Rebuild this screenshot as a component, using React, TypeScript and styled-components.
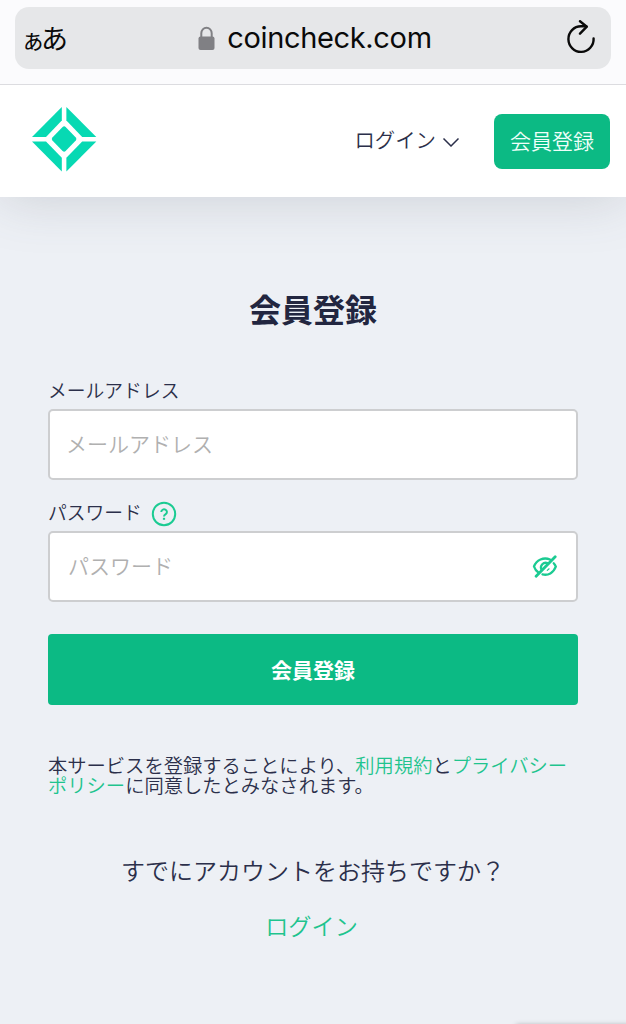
import React from "react";
import styled, { createGlobalStyle } from "styled-components";

const GlobalStyle = createGlobalStyle`
  *, *::before, *::after { box-sizing: border-box; }
  body {
    margin: 0;
    background: #edf0f5;
    color: #2b2f4a;
    font-family: "Noto Sans CJK JP", sans-serif;
    font-weight: 350;
  }
`;

const Page = styled.div`
  position: relative;
  display: flex;
  flex-direction: column;
  height: 1024px;
  overflow: hidden;
  background: #edf0f5;
`;

const BrowserBar = styled.div`
  position: relative;
  z-index: 1;
  height: 85px;
  flex: none;
  padding: 7px 15px 0;
  background: #fbfbfd;
  border-bottom: 1px solid #dcdce0;
`;

const AddressField = styled.div`
  display: flex;
  align-items: center;
  justify-content: space-between;
  height: 62px;
  padding: 0 15px 0 6px;
  border-radius: 14px;
  background: #e6e7e9;
  color: #0a0a0a;
`;

const ReaderLabel = styled.div`
  display: flex;
  align-items: baseline;
  width: 50px;
  font-weight: 400;
  font-size: 27px;
  line-height: 36px;
`;

const SmallKana = styled.span`
  margin-right: -4px;
  font-size: 24px;
`;

const Address = styled.div`
  display: flex;
  align-items: center;
  gap: 12px;
  margin-right: 7px;
  font-family: Inter, sans-serif;
  font-weight: 400;
  font-size: 29px;
  line-height: 36px;
  letter-spacing: -0.35px;
`;

const SiteHeader = styled.header`
  position: relative;
  display: flex;
  align-items: center;
  flex: none;
  height: 112px;
  padding: 0 16px 0 32px;
  background: #fff;
  box-shadow: 0 0 56px rgba(80, 85, 100, 0.22);
`;

const LogoLink = styled.a`
  display: flex;
  padding-bottom: 3px;
`;

const LoginMenu = styled.div`
  display: flex;
  align-items: center;
  gap: 6px;
  margin-left: auto;
  margin-right: 34px;
  padding-bottom: 4px;
  font-size: 20.4px;
  line-height: 28px;
`;

const ChevronSlot = styled.span`
  display: flex;
  padding-top: 4px;
`;

const HeaderButton = styled.button`
  width: 116px;
  height: 55px;
  padding: 0 0 2px;
  border: 0;
  border-radius: 8px;
  background: #0cba84;
  color: #effff9;
  font: 350 21px "Noto Sans CJK JP", sans-serif;
`;

const Main = styled.main`
  display: flex;
  flex-direction: column;
  padding: 87px 48px 0;
`;

const Title = styled.h1`
  margin: 0;
  font-size: 32px;
  font-weight: 700;
  line-height: 48px;
  text-align: center;
  color: #222640;
`;

const Field = styled.label<{ $top: number }>`
  display: flex;
  flex-direction: column;
  margin-top: ${(p) => p.$top}px;
`;

const FieldLabel = styled.span`
  display: flex;
  align-items: center;
  height: 28px;
  margin-bottom: 5px;
  gap: 9px;
  font-size: 18.8px;
  line-height: 28px;
`;

const HelpSlot = styled.span`
  display: flex;
  padding-top: 4px;
`;

const InputBox = styled.span<{ $inset: number }>`
  display: flex;
  align-items: center;
  height: 71px;
  padding: 0 18px 0 ${(p) => p.$inset}px;
  border: 2px solid #cdced0;
  border-radius: 5px;
  background: #fff;
`;

const Input = styled.input`
  flex: 1;
  min-width: 0;
  padding: 0 0 3px;
  border: 0;
  outline: 0;
  background: transparent;
  font: 350 21px/30px "Noto Sans CJK JP", sans-serif;
  color: #2b2f4a;
  &::placeholder { color: #b0b0b0; opacity: 1; }
`;

const SubmitButton = styled.button`
  height: 71px;
  margin-top: 32px;
  padding: 0 0 2px;
  border: 0;
  border-radius: 4px;
  background: #0cba84;
  color: #fff;
  font: 700 21px "Noto Sans CJK JP", sans-serif;
`;

const Terms = styled.p`
  margin: 50px 0 0;
  font-size: 19.3px;
  line-height: 20px;
`;

const TextLink = styled.a`
  color: #1fc48e;
`;

const Question = styled.p`
  margin: 57px 0 0;
  font-size: 24px;
  line-height: 36px;
  text-align: center;
`;

const LoginLink = styled(TextLink)`
  margin: 19px 3px 0 0;
  font-size: 23.2px;
  line-height: 36px;
  text-align: center;
`;

const FloatingEdge = styled.div`
  position: absolute;
  top: 1025px;
  left: 516px;
  right: -10px;
  height: 20px;
  box-shadow: 0 0 5px rgba(0, 0, 0, 0.3);
`;

const LockIcon = () => (
  <svg width="17" height="25" viewBox="0 0 17 25">
    <path d="M3.3 12V7.3a5.2 5.6 0 0 1 10.4 0V12" fill="none" stroke="#808084" strokeWidth="2" />
    <rect x="0.5" y="10.5" width="16" height="13.5" rx="2" fill="#808084" />
  </svg>
);

const ReloadIcon = () => (
  <svg width="30" height="36" viewBox="0 0 30 36" fill="none" stroke="#0a0a0a" strokeWidth="2.4" strokeLinecap="round" strokeLinejoin="round">
    <path d="M27.6 18.5A12.6 12.8 0 1 1 15 6.3h5.2" />
    <path d="M14 1.2l6.8 5.5-6.8 7" />
  </svg>
);

const Logo = () => (
  <svg width="65" height="65" viewBox="0 0 65 65" fill="#07d9b3">
    <path d="M29.8 0v13.6L14 30H0z" />
    <path d="M34.4 0v13.6L50.2 30h14.1z" />
    <path d="M0 34.4h14l15.8 16.4v13.7z" />
    <path d="M64.3 34.4H50.2L34.4 50.8v13.7z" />
    <path d="M30.6 20q1.5-1.3 3 0l10.2 10.5q1.3 1.5 0 3L33.6 44q-1.5 1.3-3 0L20.4 33.5q-1.3-1.5 0-3z" />
  </svg>
);

const Chevron = () => (
  <svg width="18" height="12" viewBox="0 0 18 12" fill="none" stroke="#2b2f4a" strokeWidth="1.5">
    <path d="M1.5 3.5L9 11l7.5-7.5" />
  </svg>
);

const HelpIcon = () => (
  <svg width="26" height="26" viewBox="0 0 26 26" fill="none" stroke="#1bcb92">
    <circle cx="13" cy="13" r="11.2" strokeWidth="2" />
    <path d="M10.3 11a2.8 2.6 0 1 1 4.4 2.1c-1.1.7-1.7 1.1-1.7 2.3" strokeWidth="2" />
    <path d="M13 16.8v2" strokeWidth="2.2" />
  </svg>
);

const HiddenEyeIcon = () => (
  <svg width="26" height="24" viewBox="0 0 26 24" fill="none" stroke="#1bcb92" strokeWidth="2.3" strokeLinecap="round">
    <path d="M18 4.5C11.5 1.8 4.5 5 2 11.5c.8 2.8 2.6 4.8 4.7 6.2" />
    <path d="M21.7 8.2c1 1 1.7 2.2 2.1 3.5C21.5 18 16 20.8 10.5 19.4" />
    <path d="M9.3 14.4a4.8 4.8 0 0 1 6.1-6.3" />
    <path d="M15.3 15.4l1.8-1.6" strokeWidth="1.2" />
    <path d="M23.2 1.8L4.1 21.3" strokeWidth="2.8" />
  </svg>
);

export default function App() {
  return (
    <Page>
      <GlobalStyle />
      <BrowserBar>
        <AddressField>
          <ReaderLabel><SmallKana>ぁ</SmallKana>あ</ReaderLabel>
          <Address><LockIcon />coincheck.com</Address>
          <ReloadIcon />
        </AddressField>
      </BrowserBar>
      <SiteHeader>
        <LogoLink><Logo /></LogoLink>
        <LoginMenu>ログイン<ChevronSlot><Chevron /></ChevronSlot></LoginMenu>
        <HeaderButton>会員登録</HeaderButton>
      </SiteHeader>
      <Main>
        <Title>会員登録</Title>
        <Field $top={44}>
          <FieldLabel>メールアドレス</FieldLabel>
          <InputBox $inset={16}><Input placeholder="メールアドレス" /></InputBox>
        </Field>
        <Field $top={18}>
          <FieldLabel>パスワード<HelpSlot><HelpIcon /></HelpSlot></FieldLabel>
          <InputBox $inset={18}>
            <Input type="password" placeholder="パスワード" />
            <HiddenEyeIcon />
          </InputBox>
        </Field>
        <SubmitButton>会員登録</SubmitButton>
        <Terms>
          本サービスを登録することにより、<TextLink>利用規約</TextLink>と<TextLink>プライバシーポリシー</TextLink>に同意したとみなされます。
        </Terms>
        <Question>すでにアカウントをお持ちですか？</Question>
        <LoginLink>ログイン</LoginLink>
      </Main>
      <FloatingEdge />
    </Page>
  );
}
